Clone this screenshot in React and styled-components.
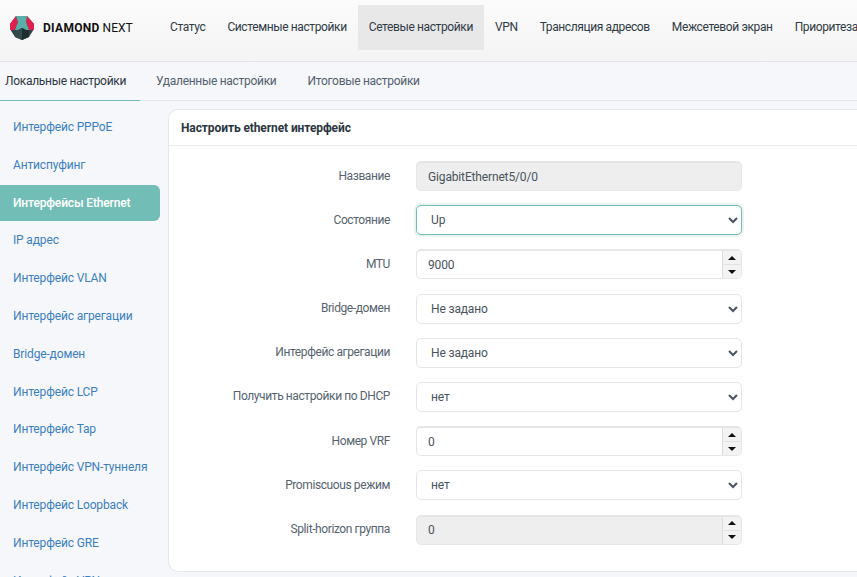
import styled, { createGlobalStyle } from "styled-components";

const GlobalStyle = createGlobalStyle`
  html, body {
    margin: 0;
    height: 100%;
    overflow: hidden;
    background: #f6f7fa;
    font-family: "Roboto", "Liberation Sans", sans-serif;
  }
`;

const Page = styled.div`
  width: 857px;
  height: 577px;
  overflow: hidden;
`;

const Header = styled.header`
  display: flex;
  align-items: flex-start;
  height: 62px;
  padding-top: 5px;
  box-sizing: border-box;
  border-bottom: 1px solid #e3e5e9;
  background: linear-gradient(#fbfbfb, #f4f4f5);
`;

const Brand = styled.div`
  display: flex;
  align-items: center;
  gap: 8px;
  width: 159px;
  flex: none;
  height: 45px;
  padding-left: 9px;
  box-sizing: border-box;
  font-size: 12px;
  color: #111;
  white-space: nowrap;
  b { font-weight: 700; letter-spacing: 0.3px; }
`;

const TopNav = styled.nav`
  display: flex;
  flex: 1;
  min-width: 0;
  overflow: hidden;
`;

const TopItem = styled.div`
  height: 45px;
  line-height: 44px;
  padding: 0 11px;
  font-size: 12px;
  letter-spacing: -0.38px;
  color: #2f3a45;
  white-space: nowrap;
  background: ${(p) => (p.$active ? "#e8e8e8" : "transparent")};
`;

const SubNav = styled.div`
  display: flex;
  height: 39px;
  box-sizing: border-box;
  border-bottom: 1px solid #e3e5e9;
`;

const SubItem = styled.div`
  height: 39px;
  box-sizing: border-box;
  line-height: 38px;
  padding: ${(p) => (p.$active ? "0 14px 0 5px" : "0 15px")};
  margin-left: ${(p) => (p.$active ? 0 : "1px")};
  font-size: 12px;
  letter-spacing: -0.3px;
  color: ${(p) => (p.$active ? "#2b3640" : "#52606d")};
  border-bottom: 1px solid ${(p) => (p.$active ? "#72bdb5" : "transparent")};
  white-space: nowrap;
`;

const Body = styled.div`
  display: flex;
  gap: 8px;
  padding-top: 8px;
`;

const Sidebar = styled.aside`
  width: 160px;
  flex: none;
`;

const SideItem = styled.div`
  height: 36px;
  line-height: 36px;
  margin-bottom: 1.8px;
  padding-left: 13px;
  font-size: 12px;
  letter-spacing: -0.15px;
  color: ${(p) => (p.$active ? "#fff" : "#3b7fc0")};
  font-weight: ${(p) => (p.$active ? 500 : 400)};
  background: ${(p) => (p.$active ? "#72bdb5" : "transparent")};
  border-radius: 0 6px 6px 0;
  white-space: nowrap;
`;

const Card = styled.section`
  flex: 1;
  height: 463px;
  box-sizing: border-box;
  background: #fff;
  border: 1px solid #e6e7ea;
  border-right: none;
  border-radius: 10px 0 0 10px;
`;

const CardHeader = styled.h2`
  margin: 0;
  height: 36px;
  line-height: 36px;
  padding-left: 12px;
  box-sizing: border-box;
  border-bottom: 1px solid #e8e9ec;
  font-size: 12px;
  font-weight: 700;
  letter-spacing: -0.1px;
  color: #2b3640;
`;

const Form = styled.div`
  display: flex;
  flex-direction: column;
  gap: 14.2px;
  padding-top: 15px;
`;

const Row = styled.div`
  display: flex;
  align-items: center;
  height: 30px;
`;

const Label = styled.label`
  width: 221px;
  flex: none;
  margin-right: 26px;
  padding-bottom: 1px;
  text-align: right;
  font-size: 12px;
  letter-spacing: -0.4px;
  color: #56636f;
  white-space: nowrap;
`;

const fieldBase = `
  width: 326px;
  height: 30px;
  box-sizing: border-box;
  border-radius: 5px;
  font-family: inherit;
  font-size: 12px;
  letter-spacing: -0.15px;
  color: #49535c;
  outline: none;
`;

const TextBox = styled.input`
  ${fieldBase}
  padding: 0 11px;
  background: ${(p) => (p.disabled ? "#eeeeee" : "#fff")};
  border: 1px solid #e6e6e6;
  border-top-width: 2px;
`;

const SelectBox = styled.select`
  ${fieldBase}
  padding: 0 10px;
  background: #fff;
  border: 1px solid ${(p) => (p.$focused ? "#72bdb5" : "#e6e6e6")};
  box-shadow: ${(p) => (p.$focused ? "0 0 0 2px #e7f4f2" : "none")};
`;

const NumberWrap = styled.div`
  ${fieldBase}
  display: flex;
  overflow: hidden;
  border: 1px solid #e6e6e6;
  border-top-width: 2px;
  background: ${(p) => (p.$disabled ? "#eeeeee" : "#fff")};
`;

const NumberInput = styled.input`
  flex: 1;
  min-width: 0;
  border: none;
  outline: none;
  padding: 0 11px;
  background: transparent;
  font: inherit;
  letter-spacing: inherit;
  color: inherit;
`;

const Spinner = styled.div`
  width: 18px;
  flex: none;
  display: flex;
  flex-direction: column;
  border-left: 1px solid #dcdcdc;
  background: #f3f3f3;
`;

const SpinButton = styled.div`
  flex: 1;
  display: flex;
  align-items: center;
  justify-content: center;
  & + & { border-top: 1px solid #e2e2e2; }
  &::before {
    content: "";
    border-left: 4px solid transparent;
    border-right: 4px solid transparent;
    border-${(p) => (p.$down ? "top" : "bottom")}: 4px solid #111;
  }
`;

const Logo = () => (
  <svg width="26" height="26" viewBox="0 0 26 26">
    <path d="M7 1h11l7 8v5l-5 8-7 3-7-3-5-8V9z" fill="#2f4447" />
    <path d="M1 9l6-8 2 6-3 8-5 0z" fill="#e0204f" />
    <path d="M25 9l-7-8-1 6 3 8h5z" fill="#e0204f" />
    <path d="M7 1h11l-1 6 3 8h-3l-4-2-4 2H6l3-8z" fill="#5ab0a8" />
    <path d="M6 15h3l4-2v12l-7-3z" fill="#33494c" />
    <path d="M20 15h-3l-4-2v12l7-3z" fill="#1f2f31" />
  </svg>
);

const NumberField = ({ value, disabled }) => (
  <NumberWrap $disabled={disabled}>
    <NumberInput readOnly value={value} disabled={disabled} />
    <Spinner>
      <SpinButton />
      <SpinButton $down />
    </Spinner>
  </NumberWrap>
);

const Choice = ({ value, focused }) => (
  <SelectBox $focused={focused} defaultValue={value}>
    <option>{value}</option>
  </SelectBox>
);

const topItems = ["Статус", "Системные настройки", "Сетевые настройки", "VPN", "Трансляция адресов", "Межсетевой экран", "Приоритезация"];

const sideItems = [
  "Интерфейс PPPoE",
  "Антиспуфинг",
  "Интерфейсы Ethernet",
  "IP адрес",
  "Интерфейс VLAN",
  "Интерфейс агрегации",
  "Bridge-домен",
  "Интерфейс LCP",
  "Интерфейс Tap",
  "Интерфейс VPN-туннеля",
  "Интерфейс Loopback",
  "Интерфейс GRE",
  "Интерфейс VPN",
];

export default function App() {
  return (
    <Page>
      <GlobalStyle />
      <Header>
        <Brand>
          <Logo />
          <span><b>DIAMOND</b> NEXT</span>
        </Brand>
        <TopNav>
          {topItems.map((t) => (
            <TopItem key={t} $active={t === "Сетевые настройки"}>{t}</TopItem>
          ))}
        </TopNav>
      </Header>
      <SubNav>
        <SubItem $active>Локальные настройки</SubItem>
        <SubItem>Удаленные настройки</SubItem>
        <SubItem>Итоговые настройки</SubItem>
      </SubNav>
      <Body>
        <Sidebar>
          {sideItems.map((t) => (
            <SideItem key={t} $active={t === "Интерфейсы Ethernet"}>{t}</SideItem>
          ))}
        </Sidebar>
        <Card>
          <CardHeader>Настроить ethernet интерфейс</CardHeader>
          <Form>
            <Row><Label>Название</Label><TextBox disabled value="GigabitEthernet5/0/0" readOnly /></Row>
            <Row><Label>Состояние</Label><Choice value="Up" focused /></Row>
            <Row><Label>MTU</Label><NumberField value="9000" /></Row>
            <Row><Label>Bridge-домен</Label><Choice value="Не задано" /></Row>
            <Row><Label>Интерфейс агрегации</Label><Choice value="Не задано" /></Row>
            <Row><Label>Получить настройки по DHCP</Label><Choice value="нет" /></Row>
            <Row><Label>Номер VRF</Label><NumberField value="0" /></Row>
            <Row><Label>Promiscuous режим</Label><Choice value="нет" /></Row>
            <Row><Label>Split-horizon группа</Label><NumberField value="0" disabled /></Row>
          </Form>
        </Card>
      </Body>
    </Page>
  );
}
